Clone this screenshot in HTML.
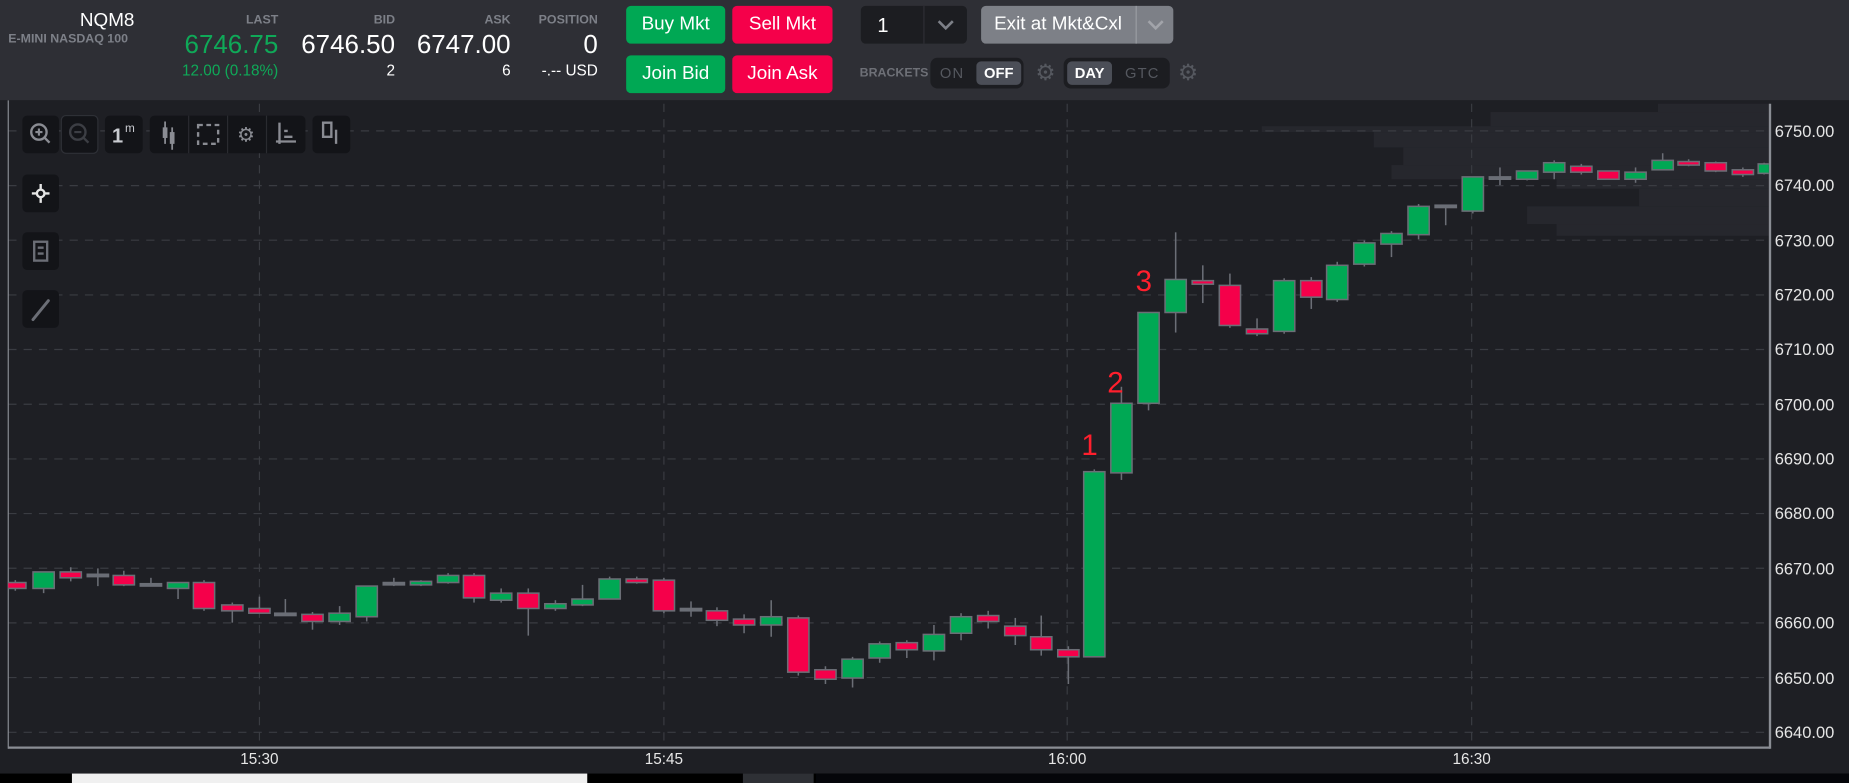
<!DOCTYPE html>
<html><head><meta charset="utf-8">
<style>
html,body{margin:0;padding:0;background:#1e1f24;overflow:hidden;width:1849px;height:783px}
#s{position:absolute;left:0;top:0;width:1568px;height:664px;transform:scale(1.17921);transform-origin:0 0;font-family:"Liberation Sans",sans-serif;background:#1e1f24}
.a{position:absolute;white-space:nowrap}
#hd{position:absolute;left:0;top:0;width:1568px;height:85px;background:#2e2f35}
.lbl{font-size:10.5px;color:#7d8088;font-weight:bold;text-align:right}
.big{font-size:22px;color:#fff;text-align:right}
.sm{font-size:13px;color:#fff;text-align:right}
.btn{position:absolute;border-radius:4px;color:#fff;font-size:16px;text-align:center;line-height:32px}
.g{background:#00a854}.r{background:#f5004a}
.tb{position:absolute;background:#131418;border-radius:5px}
</style></head><body><div id="s">
<div id="hd">
 <div class="a" style="right:1454px;top:9px;font-size:16px;color:#fff">NQM8</div>
 <div class="a" style="left:7px;top:27px;font-size:10.5px;color:#7d8088;font-weight:bold">E-MINI NASDAQ 100</div>

 <div class="a lbl" style="right:1332px;top:11px">LAST</div>
 <div class="a big" style="right:1332px;top:25px;color:#0fa958">6746.75</div>
 <div class="a sm" style="right:1332px;top:52px;color:#0fa958">12.00 (0.18%)</div>

 <div class="a lbl" style="right:1233px;top:11px">BID</div>
 <div class="a big" style="right:1233px;top:25px">6746.50</div>
 <div class="a sm" style="right:1233px;top:52px">2</div>

 <div class="a lbl" style="right:1135px;top:11px">ASK</div>
 <div class="a big" style="right:1135px;top:25px">6747.00</div>
 <div class="a sm" style="right:1135px;top:52px">6</div>

 <div class="a lbl" style="right:1061px;top:11px">POSITION</div>
 <div class="a big" style="right:1061px;top:25px">0</div>
 <div class="a sm" style="right:1061px;top:52px">-.-- USD</div>

 <div class="btn g" style="left:531px;top:5px;width:84px">Buy Mkt</div>
 <div class="btn r" style="left:621px;top:5px;width:85px">Sell Mkt</div>
 <div class="btn g" style="left:531px;top:47px;width:84px">Join Bid</div>
 <div class="btn r" style="left:621px;top:47px;width:85px">Join Ask</div>

 <div class="a" style="left:730px;top:5px;width:90px;height:32px;background:#1c1d21;border-radius:4px">
  <div class="a" style="left:14px;top:7px;font-size:17px;color:#fff">1</div>
  <div class="a" style="left:53px;top:0;width:1px;height:32px;background:#2e2f35"></div>
  <svg class="a" style="left:64px;top:11px" width="16" height="10"><path d="M2 2 L8 8 L14 2" stroke="#7d8088" stroke-width="2.2" fill="none"/></svg>
 </div>
 <div class="a" style="left:832px;top:5px;width:163px;height:32px;background:#7d8087;border-radius:4px">
  <div class="a" style="left:11px;top:7px;font-size:16px;color:#fff">Exit at Mkt&amp;Cxl</div>
  <div class="a" style="left:131px;top:0;width:1px;height:32px;background:#9a9ca2"></div>
  <svg class="a" style="left:140px;top:11px" width="16" height="10"><path d="M2 2 L8 8 L14 2" stroke="#a2a4aa" stroke-width="2.2" fill="none"/></svg>
 </div>

 <div class="a" style="left:729px;top:56px;font-size:10.5px;color:#6e7077;font-weight:bold">BRACKETS</div>
 <div class="a" style="left:789px;top:49px;width:79px;height:26px;background:#1c1d21;border-radius:6px">
  <div class="a" style="left:8px;top:6px;font-size:12.5px;color:#55585f;letter-spacing:1px">ON</div>
  <div class="a" style="left:39px;top:3px;width:38px;height:20px;background:#4b4e57;border-radius:4px;color:#fff;font-size:12.5px;font-weight:bold;text-align:center;line-height:20px">OFF</div>
 </div>
 <div class="a" style="left:878px;top:51px;font-size:19px;color:#55585f">⚙</div>
 <div class="a" style="left:902px;top:49px;width:90px;height:26px;background:#1c1d21;border-radius:6px">
  <div class="a" style="left:3px;top:3px;width:38px;height:20px;background:#4b4e57;border-radius:4px;color:#fff;font-size:12.5px;font-weight:bold;text-align:center;line-height:20px">DAY</div>
  <div class="a" style="left:52px;top:6px;font-size:12.5px;color:#55585f;letter-spacing:1px">GTC</div>
 </div>
 <div class="a" style="left:999px;top:51px;font-size:19px;color:#55585f">⚙</div>
</div>

<svg class="a" style="left:0;top:85px" width="1568" height="579" viewBox="0 85 1568 579">
 <rect x="0" y="85" width="1568" height="579" fill="#1e1f24"/>
 <g fill="#26272d">
  <rect x="1406" y="88" width="94" height="7"/>
  <rect x="1264" y="95" width="236" height="12"/>
  <rect x="1070" y="107" width="430" height="5"/>
  <rect x="1165" y="112" width="335" height="13"/>
  <rect x="1190" y="125" width="310" height="15"/>
  <rect x="1180" y="140" width="320" height="12"/>
  <rect x="1320" y="152" width="180" height="8"/>
  <rect x="1390" y="160" width="110" height="15"/>
  <rect x="1295" y="175" width="205" height="15"/>
  <rect x="1320" y="190" width="180" height="10"/>
 </g>
 <g stroke="#3a3c42" stroke-width="1" stroke-dasharray="7,6">
  <line x1="7" x2="1500" y1="111" y2="111"/><line x1="7" x2="1500" y1="157.4" y2="157.4"/>
  <line x1="7" x2="1500" y1="203.7" y2="203.7"/><line x1="7" x2="1500" y1="250.1" y2="250.1"/>
  <line x1="7" x2="1500" y1="296.4" y2="296.4"/><line x1="7" x2="1500" y1="342.8" y2="342.8"/>
  <line x1="7" x2="1500" y1="389.2" y2="389.2"/><line x1="7" x2="1500" y1="435.5" y2="435.5"/>
  <line x1="7" x2="1500" y1="481.9" y2="481.9"/><line x1="7" x2="1500" y1="528.2" y2="528.2"/>
  <line x1="7" x2="1500" y1="574.6" y2="574.6"/><line x1="7" x2="1500" y1="621" y2="621"/>
  <line x1="220" x2="220" y1="88" y2="634"/><line x1="563" x2="563" y1="88" y2="634"/>
  <line x1="905" x2="905" y1="88" y2="634"/><line x1="1248" x2="1248" y1="88" y2="634"/>
 </g>
 <line x1="7" x2="7" y1="85" y2="635" stroke="#8a8d94" stroke-width="1"/>
 <line x1="7" x2="1501" y1="634" y2="634" stroke="#8a8d94" stroke-width="2"/>
 <line x1="1501" x2="1501" y1="88" y2="635" stroke="#8a8d94" stroke-width="2"/>
 <g fill="#e6e6e6" font-family="Liberation Sans,sans-serif" font-size="14">
  <text x="1505" y="116">6750.00</text><text x="1505" y="162">6740.00</text>
  <text x="1505" y="209">6730.00</text><text x="1505" y="255">6720.00</text>
  <text x="1505" y="301">6710.00</text><text x="1505" y="348">6700.00</text>
  <text x="1505" y="394">6690.00</text><text x="1505" y="440">6680.00</text>
  <text x="1505" y="487">6670.00</text><text x="1505" y="533">6660.00</text>
  <text x="1505" y="580">6650.00</text><text x="1505" y="626">6640.00</text>
 </g>
 <g fill="#e6e6e6" font-family="Liberation Sans,sans-serif" font-size="13" text-anchor="middle">
  <text x="220" y="648">15:30</text><text x="563" y="648">15:45</text>
  <text x="905" y="648">16:00</text><text x="1248" y="648">16:30</text>
 </g>
 <svg x="7" y="85" width="1493" height="549" viewBox="7 85 1493 549">
 <g stroke="#6b6e76" stroke-width="1.3">
<line x1="13" x2="13" y1="492" y2="501"/><rect x="4" y="494" width="18" height="5" fill="#f5004a"/>
<line x1="37" x2="37" y1="485" y2="503"/><rect x="28" y="485" width="18" height="14" fill="#00a854"/>
<line x1="60" x2="60" y1="481" y2="493"/><rect x="51" y="485" width="18" height="5" fill="#f5004a"/>
<line x1="83" x2="83" y1="482" y2="497"/><rect x="74" y="487" width="18" height="2" fill="#6b6e76"/>
<line x1="105" x2="105" y1="484" y2="497"/><rect x="96" y="488" width="18" height="8" fill="#f5004a"/>
<line x1="128" x2="128" y1="490" y2="497"/><rect x="119" y="495" width="18" height="2" fill="#6b6e76"/>
<line x1="151" x2="151" y1="494" y2="508"/><rect x="142" y="494" width="18" height="5" fill="#00a854"/>
<line x1="173" x2="173" y1="492" y2="518"/><rect x="164" y="494" width="18" height="22" fill="#f5004a"/>
<line x1="197" x2="197" y1="511" y2="528"/><rect x="188" y="513" width="18" height="5" fill="#f5004a"/>
<line x1="220" x2="220" y1="506" y2="520"/><rect x="211" y="516" width="18" height="4" fill="#f5004a"/>
<line x1="242" x2="242" y1="508" y2="522"/><rect x="233" y="520" width="18" height="2" fill="#6b6e76"/>
<line x1="265" x2="265" y1="519" y2="534"/><rect x="256" y="521" width="18" height="6" fill="#f5004a"/>
<line x1="288" x2="288" y1="514" y2="530"/><rect x="279" y="520" width="18" height="7" fill="#00a854"/>
<line x1="311" x2="311" y1="497" y2="527"/><rect x="302" y="497" width="18" height="26" fill="#00a854"/>
<line x1="334" x2="334" y1="490" y2="497"/><rect x="325" y="494" width="18" height="2" fill="#6b6e76"/>
<line x1="357" x2="357" y1="492" y2="497"/><rect x="348" y="493" width="18" height="3" fill="#00a854"/>
<line x1="380" x2="380" y1="486" y2="495"/><rect x="371" y="488" width="18" height="6" fill="#00a854"/>
<line x1="402" x2="402" y1="486" y2="511"/><rect x="393" y="488" width="18" height="19" fill="#f5004a"/>
<line x1="425" x2="425" y1="499" y2="511"/><rect x="416" y="503" width="18" height="6" fill="#00a854"/>
<line x1="448" x2="448" y1="499" y2="539"/><rect x="439" y="503" width="18" height="13" fill="#f5004a"/>
<line x1="471" x2="471" y1="509" y2="518"/><rect x="462" y="512" width="18" height="4" fill="#00a854"/>
<line x1="494" x2="494" y1="496" y2="514"/><rect x="485" y="508" width="18" height="5" fill="#00a854"/>
<line x1="517" x2="517" y1="489" y2="508"/><rect x="508" y="491" width="18" height="17" fill="#00a854"/>
<line x1="540" x2="540" y1="489" y2="495"/><rect x="531" y="491" width="18" height="3" fill="#f5004a"/>
<line x1="563" x2="563" y1="490" y2="520"/><rect x="554" y="492" width="18" height="26" fill="#f5004a"/>
<line x1="586" x2="586" y1="510" y2="523"/><rect x="577" y="516" width="18" height="2" fill="#6b6e76"/>
<line x1="608" x2="608" y1="515" y2="531"/><rect x="599" y="518" width="18" height="8" fill="#f5004a"/>
<line x1="631" x2="631" y1="521" y2="537"/><rect x="622" y="525" width="18" height="5" fill="#f5004a"/>
<line x1="654" x2="654" y1="509" y2="540"/><rect x="645" y="523" width="18" height="7" fill="#00a854"/>
<line x1="677" x2="677" y1="522" y2="573"/><rect x="668" y="524" width="18" height="46" fill="#f5004a"/>
<line x1="700" x2="700" y1="565" y2="580"/><rect x="691" y="568" width="18" height="8" fill="#f5004a"/>
<line x1="723" x2="723" y1="557" y2="583"/><rect x="714" y="559" width="18" height="16" fill="#00a854"/>
<line x1="746" x2="746" y1="544" y2="562"/><rect x="737" y="546" width="18" height="12" fill="#00a854"/>
<line x1="769" x2="769" y1="543" y2="558"/><rect x="760" y="545" width="18" height="6" fill="#f5004a"/>
<line x1="792" x2="792" y1="530" y2="560"/><rect x="783" y="538" width="18" height="14" fill="#00a854"/>
<line x1="815" x2="815" y1="520" y2="543"/><rect x="806" y="523" width="18" height="14" fill="#00a854"/>
<line x1="838" x2="838" y1="518" y2="533"/><rect x="829" y="522" width="18" height="5" fill="#f5004a"/>
<line x1="861" x2="861" y1="524" y2="547"/><rect x="852" y="531" width="18" height="8" fill="#f5004a"/>
<line x1="883" x2="883" y1="522" y2="556"/><rect x="874" y="540" width="18" height="11" fill="#f5004a"/>
<line x1="906" x2="906" y1="548" y2="580"/><rect x="897" y="551" width="18" height="6" fill="#f5004a"/>
<line x1="928" x2="928" y1="398" y2="557"/><rect x="919" y="400" width="18" height="157" fill="#00a854"/>
<line x1="951" x2="951" y1="328" y2="407"/><rect x="942" y="342" width="18" height="59" fill="#00a854"/>
<line x1="974" x2="974" y1="265" y2="348"/><rect x="965" y="265" width="18" height="77" fill="#00a854"/>
<line x1="997" x2="997" y1="197" y2="282"/><rect x="988" y="237" width="18" height="28" fill="#00a854"/>
<line x1="1020" x2="1020" y1="225" y2="257"/><rect x="1011" y="238" width="18" height="3" fill="#f5004a"/>
<line x1="1043" x2="1043" y1="232" y2="278"/><rect x="1034" y="242" width="18" height="34" fill="#f5004a"/>
<line x1="1066" x2="1066" y1="270" y2="285"/><rect x="1057" y="279" width="18" height="4" fill="#f5004a"/>
<line x1="1089" x2="1089" y1="236" y2="283"/><rect x="1080" y="238" width="18" height="43" fill="#00a854"/>
<line x1="1112" x2="1112" y1="235" y2="262"/><rect x="1103" y="238" width="18" height="14" fill="#f5004a"/>
<line x1="1134" x2="1134" y1="222" y2="256"/><rect x="1125" y="225" width="18" height="29" fill="#00a854"/>
<line x1="1157" x2="1157" y1="204" y2="226"/><rect x="1148" y="206" width="18" height="18" fill="#00a854"/>
<line x1="1180" x2="1180" y1="196" y2="218"/><rect x="1171" y="198" width="18" height="9" fill="#00a854"/>
<line x1="1203" x2="1203" y1="173" y2="203"/><rect x="1194" y="175" width="18" height="24" fill="#00a854"/>
<line x1="1226" x2="1226" y1="175" y2="191"/><rect x="1217" y="174" width="18" height="2" fill="#6b6e76"/>
<line x1="1249" x2="1249" y1="150" y2="181"/><rect x="1240" y="150" width="18" height="29" fill="#00a854"/>
<line x1="1272" x2="1272" y1="142" y2="157"/><rect x="1263" y="150" width="18" height="2" fill="#6b6e76"/>
<line x1="1295" x2="1295" y1="145" y2="153"/><rect x="1286" y="145" width="18" height="7" fill="#00a854"/>
<line x1="1318" x2="1318" y1="136" y2="152"/><rect x="1309" y="138" width="18" height="8" fill="#00a854"/>
<line x1="1341" x2="1341" y1="139" y2="148"/><rect x="1332" y="141" width="18" height="5" fill="#f5004a"/>
<line x1="1364" x2="1364" y1="145" y2="152"/><rect x="1355" y="145" width="18" height="7" fill="#f5004a"/>
<line x1="1387" x2="1387" y1="142" y2="155"/><rect x="1378" y="146" width="18" height="6" fill="#00a854"/>
<line x1="1410" x2="1410" y1="130" y2="144"/><rect x="1401" y="136" width="18" height="8" fill="#00a854"/>
<line x1="1432" x2="1432" y1="135" y2="141"/><rect x="1423" y="137" width="18" height="3" fill="#f5004a"/>
<line x1="1455" x2="1455" y1="137" y2="146"/><rect x="1446" y="138" width="18" height="7" fill="#f5004a"/>
<line x1="1478" x2="1478" y1="142" y2="150"/><rect x="1469" y="144" width="18" height="4" fill="#f5004a"/>
<line x1="1496" x2="1496" y1="138" y2="148"/><rect x="1491" y="139" width="18" height="8" fill="#00a854"/>
 </g>
 </svg>
 <g fill="#ff1f2d" font-family="Liberation Sans,sans-serif" font-size="25">
  <text x="917" y="386">1</text><text x="939" y="333">2</text><text x="963" y="247">3</text>
 </g>
 <!-- toolbar -->
 <g>
  <rect x="19" y="98" width="31" height="32" rx="4" fill="#131418"/>
  <rect x="52" y="98" width="31" height="32" rx="4" fill="#131418" stroke="#2e3036"/>
  <rect x="89" y="98" width="32" height="32" rx="4" fill="#131418"/>
  <rect x="127" y="98" width="132" height="32" rx="4" fill="#131418"/>
  <rect x="265" y="98" width="32" height="32" rx="4" fill="#131418"/>
  <line x1="160" x2="160" y1="98" y2="130" stroke="#2a2b30"/><line x1="193" x2="193" y1="98" y2="130" stroke="#2a2b30"/><line x1="226" x2="226" y1="98" y2="130" stroke="#2a2b30"/>
  <circle cx="33" cy="112" r="6.5" fill="none" stroke="#8a8c93" stroke-width="2"/><line x1="38" y1="117" x2="42" y2="121" stroke="#8a8c93" stroke-width="2"/><path d="M30 112h6M33 109v6" stroke="#8a8c93" stroke-width="1.8"/>
  <circle cx="66" cy="112" r="6.5" fill="none" stroke="#3c3e44" stroke-width="2"/><line x1="71" y1="117" x2="75" y2="121" stroke="#3c3e44" stroke-width="2"/><path d="M63 112h6" stroke="#3c3e44" stroke-width="1.8"/>
  <text x="95" y="121" fill="#c9cbd0" font-family="Liberation Sans,sans-serif" font-size="17" font-weight="bold">1</text><text x="106" y="112" fill="#c9cbd0" font-family="Liberation Sans,sans-serif" font-size="10">m</text>
  <path d="M140 103v19M146 108v19" stroke="#8a8c93" stroke-width="1.5"/><rect x="138" y="108" width="4" height="9" fill="#8a8c93"/><rect x="144" y="112" width="4" height="10" fill="#8a8c93"/>
  <rect x="168" y="106" width="17" height="16" fill="none" stroke="#8a8c93" stroke-width="2" stroke-dasharray="4,3"/>
  <text x="201" y="120" fill="#8a8c93" font-size="17">⚙</text>
  <path d="M237 104v18M234 120h17M241 111h3M241 116h7" stroke="#8a8c93" stroke-width="2" fill="none"/>
  <path d="M274 104h7v12h-7z" stroke="#8a8c93" stroke-width="2" fill="none"/><path d="M285 110v12" stroke="#8a8c93" stroke-width="2"/>
  <rect x="19" y="148" width="31" height="32" rx="4" fill="#131418"/>
  <path d="M27 164h15M34.5 156v16" stroke="#e6e6e6" stroke-width="2"/><circle cx="34.5" cy="164" r="3.2" fill="#131418" stroke="#e6e6e6" stroke-width="2"/>
  <rect x="19" y="197" width="31" height="32" rx="4" fill="#131418"/>
  <rect x="29" y="205" width="11" height="16" fill="none" stroke="#6b6e76" stroke-width="2"/><path d="M32 210h5M32 215h5" stroke="#6b6e76" stroke-width="2"/>
  <rect x="19" y="246" width="31" height="32" rx="4" fill="#131418"/>
  <path d="M28 271L41 255" stroke="#6b6e76" stroke-width="2.5" stroke-linecap="round"/>
 </g>
 <!-- bottom bar -->
 <rect x="0" y="656" width="1568" height="8" fill="#000"/>
 <rect x="61" y="656" width="437" height="8" fill="#f0f0f0"/>
 <rect x="630" y="656" width="60" height="8" fill="#2e3035"/>
 <rect x="692" y="656" width="876" height="8" fill="#05060a"/>
</svg>
</div></body></html>
